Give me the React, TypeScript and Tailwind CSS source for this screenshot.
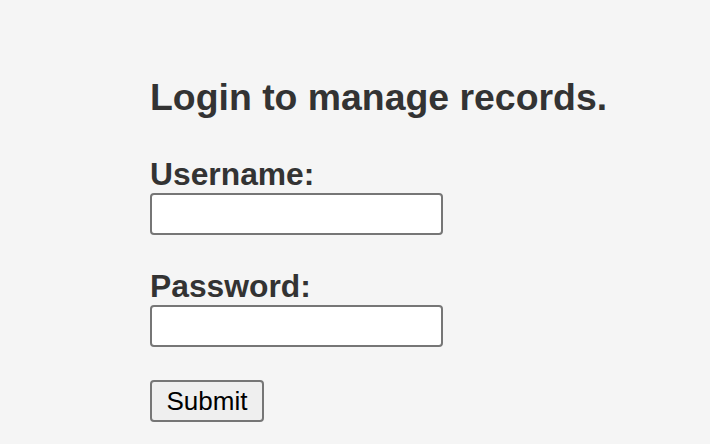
export default function App() {
  return (
    <div
      className="min-h-screen w-full bg-[#f5f5f5] pl-[150px] pt-[76px] text-[#333333]"
      style={{ fontFamily: '"Liberation Sans", Arial, sans-serif' }}
    >
      <h2 className="text-[37.4px] font-bold leading-[42px]">Login to manage records.</h2>
      <form className="mt-[37px] flex flex-col items-start" onSubmit={(e) => e.preventDefault()}>
        <label htmlFor="username" className="text-[31.8px] font-bold leading-[38px]">
          Username:
        </label>
        <input
          id="username"
          type="text"
          className="h-[42px] w-[293px] rounded-[4px] border-2 border-[#767676] bg-white px-2 text-[26px] outline-none"
        />
        <label htmlFor="password" className="mt-[32px] text-[31.8px] font-bold leading-[38px]">
          Password:
        </label>
        <input
          id="password"
          type="password"
          className="h-[42px] w-[293px] rounded-[4px] border-2 border-[#767676] bg-white px-2 text-[26px] outline-none"
        />
        <button
          type="submit"
          className="mt-[33px] h-[42px] w-[114px] rounded-[4px] border-2 border-[#767676] bg-[#efefef] text-[26px] leading-none text-black"
        >
          Submit
        </button>
      </form>
    </div>
  )
}
